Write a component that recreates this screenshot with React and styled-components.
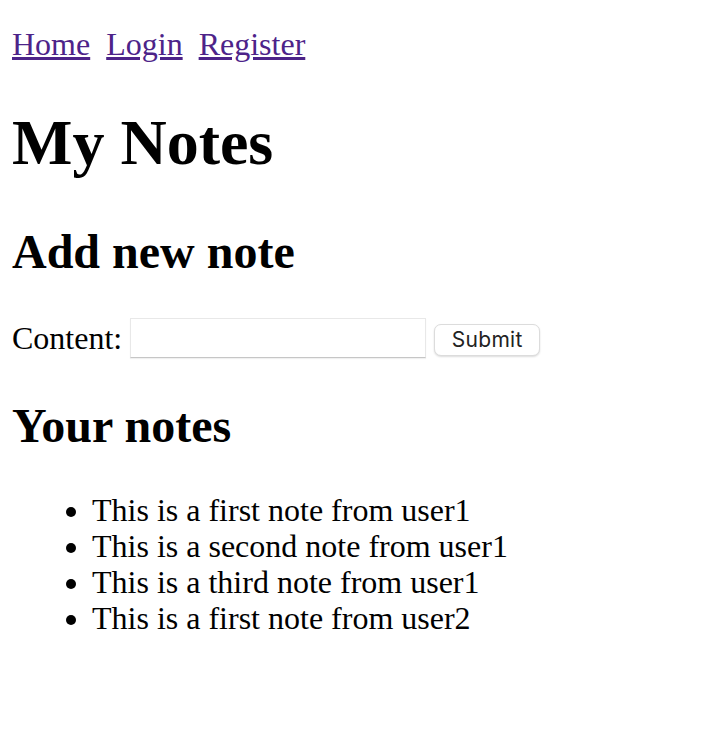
import React from "react";
import styled, { createGlobalStyle } from "styled-components";

const Global = createGlobalStyle`
  html, body { background: #fff; }
  body {
    margin: 0;
    padding: 12px;
    font-family: "Liberation Serif", "Times New Roman", serif;
    font-size: 32px;
    color: #000;
  }
`;

const Nav = styled.nav`
  margin: 14px 0 0;
  display: flex;
  gap: 16px;
`;

const NavLink = styled.a`
  color: #4d2389;
  text-decoration: underline;
  text-underline-offset: 2px;
`;

const Title = styled.h1`
  font-size: 64px;
  margin: 43px 0 44px;
`;

const SubTitle = styled.h2`
  font-size: 48px;
  margin: 36px 0;
`;

const Form = styled.form`
  display: flex;
  align-items: center;
  padding: 3px 0 4px;
  margin: 0;
`;

const Label = styled.label`
  margin-right: 8px;
`;

const Input = styled.input`
  width: 296px;
  height: 40px;
  box-sizing: border-box;
  border: 1px solid #e8e8e8;
  border-bottom: 1px solid #c6c6c6;
  box-shadow: 0 1px 1px rgba(0, 0, 0, 0.06);
  padding: 2px 4px;
  font-size: 20px;
  margin-right: 8px;
`;

const Button = styled.button`
  width: 106px;
  height: 32px;
  margin-top: 3px;
  box-sizing: border-box;
  background: #fff;
  border: 1px solid #dcdcdc;
  border-radius: 7px;
  box-shadow: 0 1px 2px rgba(0, 0, 0, 0.14);
  font-family: Inter, "Liberation Sans", Arial, sans-serif;
  font-size: 21px;
  letter-spacing: 0.3px;
  color: #222;
  padding: 0;
`;

const List = styled.ul`
  margin: 39px 0 36px;
  padding-left: 80px;
`;

const Item = styled.li`
  line-height: 36px;
`;

const notes = [
  "This is a first note from user1",
  "This is a second note from user1",
  "This is a third note from user1",
  "This is a first note from user2",
];

export default function App() {
  return (
    <>
      <Global />
      <Nav>
        <NavLink href="#">Home</NavLink>
        <NavLink href="#">Login</NavLink>
        <NavLink href="#">Register</NavLink>
      </Nav>
      <Title>My Notes</Title>
      <SubTitle>Add new note</SubTitle>
      <Form onSubmit={(e) => e.preventDefault()}>
        <Label>Content:</Label>
        <Input type="text" />
        <Button type="submit">Submit</Button>
      </Form>
      <SubTitle>Your notes</SubTitle>
      <List>
        {notes.map((n) => (
          <Item key={n}>{n}</Item>
        ))}
      </List>
    </>
  );
}
